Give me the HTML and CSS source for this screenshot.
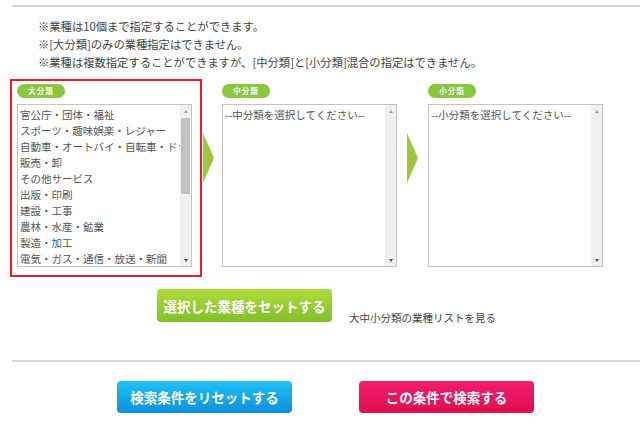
FILE: index.html
```html
<!DOCTYPE html>
<html lang="ja">
<head>
    <meta charset="UTF-8">
    <meta name="viewport" content="width=device-width, initial-scale=1.0">
    <title>業種指定</title>
    <link rel="stylesheet" href="styles.css">
</head>
<body>

<div class="rule"></div>

<ul class="notes">
    <li>※業種は10個まで指定することができます。</li>
    <li>※[大分類]のみの業種指定はできません。</li>
    <li>※業種は複数指定することができますが、[中分類]と[小分類]混合の指定はできません。</li>
</ul>

<div class="picker">
    <div class="col col-major">
        <span class="pill">大分類</span>
        <div class="listbox">
            <ul class="options">
                <li>官公庁・団体・福祉</li>
                <li>スポーツ・趣味娯楽・レジャー</li>
                <li>自動車・オートバイ・自転車・ドライブ</li>
                <li>販売・卸</li>
                <li>その他サービス</li>
                <li>出版・印刷</li>
                <li>建設・工事</li>
                <li>農林・水産・鉱業</li>
                <li>製造・加工</li>
                <li>電気・ガス・通信・放送・新聞</li>
            </ul>
            <div class="scrollbar">
                <span class="sb-up"></span>
                <div class="sb-track"><span class="sb-thumb"></span></div>
                <span class="sb-down"></span>
            </div>
        </div>
    </div>

    <span class="arrow arrow-first"></span>

    <div class="col">
        <span class="pill">中分類</span>
        <div class="listbox">
            <ul class="options">
                <li>--中分類を選択してください--</li>
            </ul>
            <div class="scrollbar">
                <span class="sb-up"></span>
                <div class="sb-track"></div>
                <span class="sb-down"></span>
            </div>
        </div>
    </div>

    <span class="arrow arrow-second"></span>

    <div class="col">
        <span class="pill">小分類</span>
        <div class="listbox">
            <ul class="options">
                <li>--小分類を選択してください--</li>
            </ul>
            <div class="scrollbar">
                <span class="sb-up"></span>
                <div class="sb-track"></div>
                <span class="sb-down"></span>
            </div>
        </div>
    </div>
</div>

<div class="set-row">
    <button class="btn btn-set">選択した業種をセットする</button>
    <a class="list-link">大中小分類の業種リストを見る</a>
</div>

<div class="rule rule-bottom"></div>

<div class="actions">
    <button class="btn btn-reset">検索条件をリセットする</button>
    <button class="btn btn-search">この条件で検索する</button>
</div>

</body>
</html>
```

FILE: styles.css
```css
body {
    margin: 0;
    font-family: "Noto Sans CJK JP", "Noto Sans", sans-serif;
    color: #444;
    background: #fff;
}

.rule {
    height: 2px;
    margin: 5px 0 0 12px;
    background: #d6d6d6;
}

.notes {
    list-style: none;
    margin: 10px 0 0 38px;
    padding: 0;
    font-size: 11.3px;
    line-height: 18px;
}

.picker {
    display: flex;
    align-items: flex-start;
    margin: 8px 0 0 10px;
}

.col {
    width: 175px;
    padding-top: 5px;
}

.col-major {
    width: 175px;
    border: 2px solid #ee1c25;
    padding: 3px 8px 8px 5px;
}

.pill {
    display: block;
    width: 48px;
    height: 14px;
    border-radius: 7px;
    background: #8cc63f;
    color: #fff;
    font-size: 7.5px;
    font-weight: bold;
    letter-spacing: 1px;
    line-height: 14px;
    text-align: center;
}

.listbox {
    display: flex;
    height: 163px;
    margin-top: 6px;
    border: 1px solid #c4c4c4;
    box-sizing: border-box;
    background: #fff;
}

.options {
    flex: 1;
    min-width: 0;
    list-style: none;
    margin: 0;
    padding: 2px 0 0 2px;
    overflow: hidden;
    white-space: nowrap;
    font-size: 10.5px;
    line-height: 16px;
    color: #555;
}

.scrollbar {
    display: flex;
    flex-direction: column;
    width: 11px;
    background: #f0f0f0;
}

.sb-up,
.sb-down {
    display: flex;
    justify-content: center;
    align-items: center;
    height: 12px;
}

.sb-up::before,
.sb-down::before {
    content: "";
    border-left: 2.5px solid transparent;
    border-right: 2.5px solid transparent;
}

.sb-up::before {
    border-bottom: 3px solid #a3a3a3;
}

.sb-down::before {
    border-top: 3px solid #505050;
}

.sb-track {
    flex: 1;
    padding: 1px 1px 0;
}

.sb-thumb {
    display: block;
    height: 76px;
    background: #c1c1c1;
}

.arrow {
    width: 0;
    height: 0;
    margin-top: 54px;
    border-left: 11px solid #9dc83b;
    border-top: 25px solid transparent;
    border-bottom: 25px solid transparent;
}

.arrow-first {
    margin-left: 1px;
    margin-right: 8px;
}

.arrow-second {
    margin-left: 10px;
    margin-right: 10px;
}

.set-row {
    display: flex;
    align-items: flex-end;
    margin: 12px 0 0 157px;
}

.btn {
    width: 175px;
    border: none;
    border-radius: 4px;
    color: #fff;
    font-family: "Noto Sans CJK JP", "Noto Sans", sans-serif;
    font-size: 13.5px;
    font-weight: bold;
    padding: 0;
}

.btn-set {
    height: 33px;
    background: linear-gradient(#b0dc3a, #80c02c);
}

.list-link {
    margin: 0 0 -3px 17px;
    font-size: 10.5px;
    line-height: 14px;
    color: #444;
}

.rule-bottom {
    margin-top: 38px;
}

.actions {
    display: flex;
    gap: 67px;
    margin: 19px 0 0 117px;
}

.btn-reset,
.btn-search {
    height: 32px;
}

.btn-reset {
    background: linear-gradient(#1ec3f2, #0e8fdd);
}

.btn-search {
    background: linear-gradient(#f41c6f, #de0f4d);
}
```
